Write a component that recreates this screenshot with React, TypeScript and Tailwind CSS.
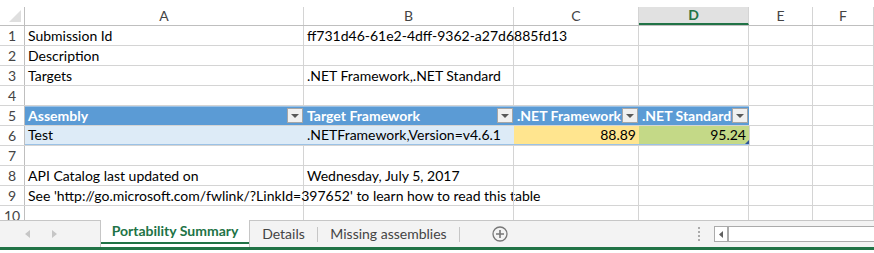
import React from 'react';

const COLS = ['A', 'B', 'C', 'D', 'E', 'F'];
const WIDTHS = ['w-[279px]', 'w-[210px]', 'w-[125px]', 'w-[110px]', 'w-[64px]', 'flex-1'];

const FilterButton = () => (
  <span className="ml-auto mb-[1px] grid h-[15px] w-[16px] shrink-0 place-content-center border border-[#a6a6a6] bg-[#f0f0f0]">
    <svg width="8" height="4" viewBox="0 0 8 4">
      <path d="M0 0h8L4 4z" fill="#595959" />
    </svg>
  </span>
);

const Cell = ({ w, children, className = '' }: { w: string; children?: React.ReactNode; className?: string }) => (
  <div className={`${w} flex h-full shrink-0 items-center overflow-visible whitespace-nowrap border-r border-[#d4d4d4] px-[3px] ${className}`}>
    {children}
  </div>
);

const Row = ({ n, cells, className = '' }: { n: number; cells: React.ReactNode[]; className?: string }) => (
  <div className={`flex h-[20px] shrink-0 border-b border-[#d4d4d4] ${className}`}>
    <div className="flex w-[25px] shrink-0 items-center justify-center border-r border-[#bfbfbf] bg-white text-[#444]">{n}</div>
    {WIDTHS.map((w, i) => (
      <Cell key={i} w={w}>
        {cells[i]}
      </Cell>
    ))}
  </div>
);

export default function App() {
  return (
    <div className="flex h-[253px] w-[874px] flex-col overflow-hidden bg-white text-[14px] leading-none text-black" style={{ fontFamily: 'Lato, "Liberation Sans", sans-serif' }}>
      <div className="flex h-[220px] flex-col overflow-hidden pt-[7px]">
        {/* column headers */}
        <div className="flex h-[19px] shrink-0 border-b border-[#bfbfbf] text-[#444]">
          <div className="flex w-[25px] shrink-0 items-end justify-end border-r border-[#bfbfbf] p-[3px]">
            <svg width="12" height="12" viewBox="0 0 12 12">
              <path d="M12 0v12H0z" fill="#dfdfdf" />
            </svg>
          </div>
          {COLS.map((c, i) => (
            <div
              key={c}
              className={`${WIDTHS[i]} flex shrink-0 items-center justify-center border-r border-[#d4d4d4] ${
                c === 'D' ? 'border-b-2 border-b-[#217346] bg-[#e1e1e1] font-bold text-[#217346]' : ''
              }`}
            >
              {c}
            </div>
          ))}
        </div>
        <Row n={1} cells={['Submission Id', 'ff731d46-61e2-4dff-9362-a27d6885fd13']} />
        <Row n={2} cells={['Description']} />
        <Row n={3} cells={['Targets', '.NET Framework,.NET Standard']} />
        <Row n={4} cells={[]} />
        {/* table header */}
        <div className="flex h-[20px] shrink-0 border-b border-[#d4d4d4]">
          <div className="flex w-[25px] shrink-0 items-center justify-center border-r border-[#bfbfbf] text-[#444]">5</div>
          {['Assembly', 'Target Framework', '.NET Framework', '.NET Standard'].map((t, i) => (
            <div key={t} className={`${WIDTHS[i]} flex h-full shrink-0 items-center whitespace-nowrap border-t border-[#9bc2e6] bg-[#5b9bd5] pl-[3px] pr-[1px] font-bold text-white`}>
              {t}
              <FilterButton />
            </div>
          ))}
          <Cell w={WIDTHS[4]} />
          <Cell w={WIDTHS[5]} />
        </div>
        {/* table row */}
        <div className="flex h-[20px] shrink-0 border-b border-[#d4d4d4]">
          <div className="flex w-[25px] shrink-0 items-center justify-center border-r border-[#bfbfbf] text-[#444]">6</div>
          <div className={`${WIDTHS[0]} flex shrink-0 items-center border-b border-[#9bc2e6] bg-[#ddebf7] px-[3px]`}>Test</div>
          <div className={`${WIDTHS[1]} flex shrink-0 items-center border-b border-[#9bc2e6] bg-[#ddebf7] px-[3px]`}>.NETFramework,Version=v4.6.1</div>
          <div className={`${WIDTHS[2]} flex shrink-0 items-center justify-end border-b border-[#9bc2e6] bg-[#ffe58f] px-[3px]`}>88.89</div>
          <div className={`${WIDTHS[3]} relative flex shrink-0 items-center justify-end border-b border-[#9bc2e6] bg-[#c4d987] px-[3px]`}>
            95.24
            <svg className="absolute bottom-0 right-0" width="4" height="4" viewBox="0 0 4 4">
              <path d="M4 0v4H0z" fill="#2f5597" />
            </svg>
          </div>
          <Cell w={WIDTHS[4]} className="border-l border-[#d4d4d4]" />
          <Cell w={WIDTHS[5]} />
        </div>
        <Row n={7} cells={[]} />
        <Row n={8} cells={['API Catalog last updated on', 'Wednesday, July 5, 2017']} />
        <Row n={9} cells={["See 'http://go.microsoft.com/fwlink/?LinkId=397652' to learn how to read this table"]} />
        <Row n={10} cells={[]} />
      </div>

      {/* sheet tabs */}
      <div className="flex h-[27px] shrink-0 items-stretch bg-[#f3f3f3] text-[#444]">
        <div className="flex w-[100px] items-center gap-[22px] border-t border-[#c6c6c6] pl-[25px]">
          <svg width="5" height="8" viewBox="0 0 5 8"><path d="M5 0v8L0 4z" fill="#c6c6c6" /></svg>
          <svg width="5" height="8" viewBox="0 0 5 8"><path d="M0 0v8l5-4z" fill="#c6c6c6" /></svg>
        </div>
        <div className="flex w-[150px] flex-col border-x border-[#c6c6c6] bg-white">
          <div className="flex flex-1 items-center justify-center font-bold text-[#217346]">Portability Summary</div>
          <div className="mb-[3px] h-[2px] bg-[#217346]" />
        </div>
        <div className="flex flex-1 items-center border-t border-[#c6c6c6]">
          <div className="flex w-[67px] items-center justify-center">Details</div>
          <div className="h-[15px] w-px bg-[#c6c6c6]" />
          <div className="flex w-[141px] items-center justify-center">Missing assemblies</div>
          <div className="h-[15px] w-px bg-[#c6c6c6]" />
          <svg className="ml-[32px]" width="16" height="16" viewBox="0 0 16 16">
            <circle cx="8" cy="8" r="7" fill="none" stroke="#777" strokeWidth="1.3" />
            <path d="M8 4v8M4 8h8" stroke="#777" strokeWidth="1.6" />
          </svg>
          <div className="ml-[190px] flex flex-col gap-[2px]">
            <span className="h-[2px] w-[2px] bg-[#aaa]" />
            <span className="h-[2px] w-[2px] bg-[#aaa]" />
            <span className="h-[2px] w-[2px] bg-[#aaa]" />
            <span className="h-[2px] w-[2px] bg-[#aaa]" />
          </div>
          <div className="ml-[14px] flex h-[16px] flex-1 border border-r-0 border-[#ababab] bg-white">
            <div className="flex w-[14px] items-center justify-center border-r-2 border-[#ababab] bg-white">
              <svg width="4" height="7" viewBox="0 0 4 7"><path d="M4 0v7L0 3.5z" fill="#606060" /></svg>
            </div>
          </div>
        </div>
      </div>
      <div className="h-[3px] shrink-0 bg-[#217346]" />
    </div>
  );
}
